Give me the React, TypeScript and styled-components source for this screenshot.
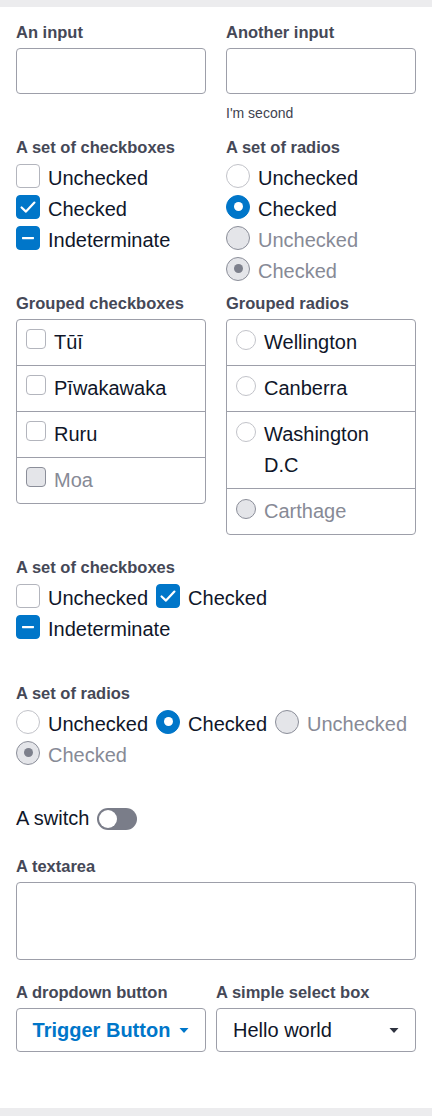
import React from "react";
import styled, { createGlobalStyle } from "styled-components";

const BLUE = "#0076c9";
const TEXT = "#0f1629";
const LABEL = "#454857";
const MUTED = "#878a96";
const BORDER = "#9d9fa9";

const GlobalStyle = createGlobalStyle`
  html, body { margin: 0; padding: 0; background: #ececee; }
  body { font-family: "Liberation Sans", Arial, sans-serif; }
  *, *::before, *::after { box-sizing: border-box; }
`;

const Page = styled.div`
  padding: 7px 0 8px;
`;

const Card = styled.main`
  background: #fff;
  min-height: 1101px;
  padding: 15px 16px 0;
`;

const TwoCol = styled.div<{ $mt?: number; $cols?: string; $gap?: number }>`
  display: grid;
  grid-template-columns: ${(p) => p.$cols ?? "190px 190px"};
  column-gap: ${(p) => p.$gap ?? 20}px;
  align-items: start;
  margin-top: ${(p) => p.$mt ?? 0}px;
`;

const Field = styled.div<{ $mt?: number }>`
  display: flex;
  flex-direction: column;
  margin-top: ${(p) => p.$mt ?? 0}px;
`;

const Label = styled.label`
  display: block;
  font-size: 16.5px;
  font-weight: 700;
  line-height: 20px;
  color: ${LABEL};
  margin-bottom: 6px;
`;

const TextInput = styled.input`
  display: block;
  width: 100%;
  height: 46px;
  border: 1px solid ${BORDER};
  border-radius: 4px;
  background: #fff;
  font: inherit;
`;

const TextArea = styled.textarea`
  display: block;
  width: 100%;
  height: 78px;
  border: 1px solid ${BORDER};
  border-radius: 4px;
  background: #fff;
  resize: none;
  font: inherit;
`;

const Help = styled.div`
  margin-top: 11px;
  font-size: 14px;
  line-height: 16px;
  color: #404350;
`;

const ChoiceList = styled.div<{ $inline?: boolean }>`
  display: flex;
  flex-direction: ${(p) => (p.$inline ? "row" : "column")};
  flex-wrap: wrap;
  column-gap: 8px;
`;

const Choice = styled.div<{ $disabled?: boolean }>`
  display: flex;
  align-items: flex-start;
  gap: 8px;
  font-size: 20px;
  line-height: 31px;
  color: ${(p) => (p.$disabled ? MUTED : TEXT)};
`;

type BoxState = "off" | "on" | "mixed" | "disabled";

const Box = styled.span<{ $size: number; $state: BoxState; $mt: number }>`
  flex: none;
  display: flex;
  align-items: center;
  justify-content: center;
  width: ${(p) => p.$size}px;
  height: ${(p) => p.$size}px;
  margin-top: ${(p) => p.$mt}px;
  border-radius: 4px;
  border: 1px solid
    ${(p) =>
      p.$state === "on" || p.$state === "mixed"
        ? BLUE
        : p.$state === "disabled"
        ? "#8b8e99"
        : "#b3b5bd"};
  background: ${(p) =>
    p.$state === "on" || p.$state === "mixed"
      ? BLUE
      : p.$state === "disabled"
      ? "#e4e5e9"
      : "#fff"};
`;

const Radio = styled.span<{ $size: number; $state: BoxState; $mt: number }>`
  flex: none;
  display: flex;
  align-items: center;
  justify-content: center;
  width: ${(p) => p.$size}px;
  height: ${(p) => p.$size}px;
  margin-top: ${(p) => p.$mt}px;
  border-radius: 50%;
  border: 1px solid
    ${(p) =>
      p.$state === "on"
        ? BLUE
        : p.$state === "disabled" || p.$state === "mixed"
        ? "#8b8e99"
        : "#c2c3c9"};
  background: ${(p) =>
    p.$state === "on"
      ? BLUE
      : p.$state === "disabled" || p.$state === "mixed"
      ? "#e4e5e9"
      : "#fff"};
`;

const Dot = styled.span<{ $color: string }>`
  width: 9px;
  height: 9px;
  border-radius: 50%;
  background: ${(p) => p.$color};
`;

const Check = () => (
  <svg width="24" height="24" viewBox="0 0 24 24" fill="none">
    <path d="M5 12.5 L9.8 17 L19 7.2" stroke="#fff" strokeWidth="2.4" strokeLinecap="round" strokeLinejoin="round" />
  </svg>
);

const Dash = () => (
  <svg width="24" height="24" viewBox="0 0 24 24" fill="none">
    <rect x="5.5" y="10.8" width="13" height="2.6" rx="0.5" fill="#fff" />
  </svg>
);

const Checkbox = ({
  label,
  state,
  size = 24,
  mt = 0.5,
}: {
  label: string;
  state: BoxState;
  size?: number;
  mt?: number;
}) => (
  <Choice $disabled={state === "disabled"}>
    <Box $size={size} $state={state} $mt={mt}>
      {state === "on" && <Check />}
      {state === "mixed" && <Dash />}
    </Box>
    <span>{label}</span>
  </Choice>
);

// radio states: off, on, disabled (unchecked disabled), mixed = disabled checked
const RadioItem = ({
  label,
  state,
  size = 24,
  mt = 0.5,
}: {
  label: string;
  state: BoxState;
  size?: number;
  mt?: number;
}) => (
  <Choice $disabled={state === "disabled" || state === "mixed"}>
    <Radio $size={size} $state={state} $mt={mt}>
      {state === "on" && <Dot $color="#fff" />}
      {state === "mixed" && <Dot $color="#7d808c" />}
    </Radio>
    <span>{label}</span>
  </Choice>
);

const Group = styled.div`
  border: 1px solid ${BORDER};
  border-radius: 4px;
  background: #fff;
`;

const GroupRow = styled.div`
  padding: 7px 9px;
  border-bottom: 1px solid ${BORDER};
  &:last-child {
    border-bottom: none;
  }
`;

const SwitchRow = styled.div<{ $mt: number }>`
  display: flex;
  align-items: center;
  gap: 8px;
  margin-top: ${(p) => p.$mt}px;
  font-size: 20px;
  line-height: 31px;
  color: ${TEXT};
`;

const Track = styled.span`
  display: flex;
  align-items: center;
  width: 40px;
  height: 22px;
  padding: 2px;
  border-radius: 11px;
  background: #7a7d89;
`;

const Knob = styled.span`
  width: 18px;
  height: 18px;
  border-radius: 50%;
  background: #fff;
`;

const TriggerButton = styled.button`
  display: flex;
  align-items: center;
  justify-content: center;
  gap: 9px;
  width: 100%;
  height: 44px;
  border: 1px solid ${BORDER};
  border-radius: 4px;
  background: #fff;
  color: ${BLUE};
  font-family: inherit;
  font-size: 20px;
  font-weight: 700;
  padding: 0;
`;

const SelectBox = styled.button`
  display: flex;
  align-items: center;
  justify-content: space-between;
  width: 100%;
  height: 44px;
  padding: 0 16px;
  border: 1px solid ${BORDER};
  border-radius: 4px;
  background: #fff;
  color: ${TEXT};
  font-family: inherit;
  font-size: 20px;
  text-align: left;
`;

const Caret = ({ color }: { color: string }) => (
  <svg width="10" height="5" viewBox="0 0 10 5">
    <path d="M0.5 0 L9.5 0 L5 5 Z" fill={color} />
  </svg>
);

export default function App() {
  return (
    <>
      <GlobalStyle />
      <Page>
        <Card>
          <TwoCol>
            <Field>
              <Label>An input</Label>
              <TextInput />
            </Field>
            <Field>
              <Label>Another input</Label>
              <TextInput />
              <Help>I'm second</Help>
            </Field>
          </TwoCol>

          <TwoCol $mt={16}>
            <Field>
              <Label>A set of checkboxes</Label>
              <ChoiceList>
                <Checkbox label="Unchecked" state="off" />
                <Checkbox label="Checked" state="on" />
                <Checkbox label="Indeterminate" state="mixed" />
              </ChoiceList>
            </Field>
            <Field>
              <Label>A set of radios</Label>
              <ChoiceList>
                <RadioItem label="Unchecked" state="off" />
                <RadioItem label="Checked" state="on" />
                <RadioItem label="Unchecked" state="disabled" />
                <RadioItem label="Checked" state="mixed" />
              </ChoiceList>
            </Field>
          </TwoCol>

          <TwoCol $mt={6}>
            <Field>
              <Label>Grouped checkboxes</Label>
              <Group>
                {["Tūī", "Pīwakawaka", "Ruru"].map((t) => (
                  <GroupRow key={t}>
                    <Checkbox label={t} state="off" size={20} mt={2} />
                  </GroupRow>
                ))}
                <GroupRow>
                  <Checkbox label="Moa" state="disabled" size={20} mt={2} />
                </GroupRow>
              </Group>
            </Field>
            <Field>
              <Label>Grouped radios</Label>
              <Group>
                {["Wellington", "Canberra", "Washington D.C"].map((t) => (
                  <GroupRow key={t}>
                    <RadioItem label={t} state="off" size={20} mt={3} />
                  </GroupRow>
                ))}
                <GroupRow>
                  <RadioItem label="Carthage" state="disabled" size={20} mt={3} />
                </GroupRow>
              </Group>
            </Field>
          </TwoCol>

          <Field $mt={22}>
            <Label>A set of checkboxes</Label>
            <ChoiceList $inline>
              <Checkbox label="Unchecked" state="off" />
              <Checkbox label="Checked" state="on" />
              <Checkbox label="Indeterminate" state="mixed" />
            </ChoiceList>
          </Field>

          <Field $mt={38}>
            <Label>A set of radios</Label>
            <ChoiceList $inline>
              <RadioItem label="Unchecked" state="off" />
              <RadioItem label="Checked" state="on" />
              <RadioItem label="Unchecked" state="disabled" />
              <RadioItem label="Checked" state="mixed" />
            </ChoiceList>
          </Field>

          <SwitchRow $mt={32}>
            <span>A switch</span>
            <Track>
              <Knob />
            </Track>
          </SwitchRow>

          <Field $mt={22}>
            <Label>A textarea</Label>
            <TextArea />
          </Field>

          <TwoCol $mt={22} $cols="190px 200px" $gap={10}>
            <Field>
              <Label>A dropdown button</Label>
              <TriggerButton>
                Trigger Button
                <Caret color={BLUE} />
              </TriggerButton>
            </Field>
            <Field>
              <Label>A simple select box</Label>
              <SelectBox>
                Hello world
                <Caret color="#2f3340" />
              </SelectBox>
            </Field>
          </TwoCol>
        </Card>
      </Page>
    </>
  );
}
